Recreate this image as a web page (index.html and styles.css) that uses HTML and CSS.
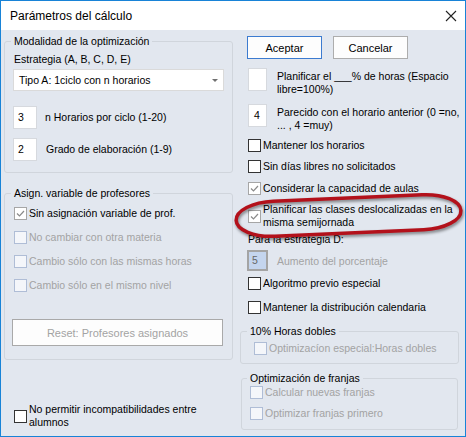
FILE: index.html
```html
<!DOCTYPE html>
<html lang="es">
  <head>
    <meta charset="UTF-8" />
    <title>Parámetros del cálculo</title>
    <link rel="stylesheet" href="styles.css">
  </head>
  <body>
    <div class="window">
      <div class="titlebar">
        <span class="title">Parámetros del cálculo</span>
        <svg class="close" width="12" height="12" viewBox="0 0 12 12">
          <path d="M1 1 L11 11 M11 1 L1 11" stroke="#222" stroke-width="1.1" fill="none" />
        </svg>
      </div>

      <div class="content">
        <div class="col-left">
          <fieldset class="group g-modal">
            <legend>Modalidad de la optimización</legend>
            <div class="label">Estrategia (A, B, C, D, E)</div>
            <div class="combo">
              <span>Tipo A: 1ciclo con n horarios</span>
              <span class="arrow"></span>
            </div>
            <div class="field-row row-n">
              <span class="input in-left">3</span>
              <span class="field-text">n Horarios por ciclo (1-20)</span>
            </div>
            <div class="field-row row-g">
              <span class="input in-left">2</span>
              <span class="field-text">Grado de elaboración (1-9)</span>
            </div>
          </fieldset>

          <fieldset class="group g-asign">
            <legend>Asign. variable de profesores</legend>
            <label class="check first checked">
              <span class="box"><svg width="11" height="11" viewBox="0 0 11 11"><path d="M2 5.5 L4.5 8 L9 3" stroke="#8a8a8a" stroke-width="1.2" fill="none" /></svg></span>
              <span>Sin asignación variable de prof.</span>
            </label>
            <label class="check disabled">
              <span class="box"></span>
              <span>No cambiar con otra materia</span>
            </label>
            <label class="check disabled">
              <span class="box"></span>
              <span>Cambio sólo con las mismas horas</span>
            </label>
            <label class="check disabled">
              <span class="box"></span>
              <span>Cambio sólo en el mismo nivel</span>
            </label>
            <div class="btn btn-reset">Reset: Profesores asignados</div>
          </fieldset>

          <label class="check bottom-check">
            <span class="box"></span>
            <span>No permitir incompatibilidades entre<br>alumnos</span>
          </label>
        </div>

        <div class="col-right">
          <div class="buttons">
            <div class="btn btn-default">Aceptar</div>
            <div class="btn">Cancelar</div>
          </div>

          <div class="field-row row-plan">
            <span class="input in-right"></span>
            <span class="field-text">Planificar el ___% de horas (Espacio<br>libre=100%)</span>
          </div>
          <div class="field-row row-par">
            <span class="input in-right">4</span>
            <span class="field-text">Parecido con el horario anterior (0 =no,<br>... , 4 =muy)</span>
          </div>

          <label class="check r1">
            <span class="box"></span>
            <span>Mantener los horarios</span>
          </label>
          <label class="check r2">
            <span class="box"></span>
            <span>Sin días libres no solicitados</span>
          </label>
          <label class="check r3 checked">
            <span class="box"><svg width="11" height="11" viewBox="0 0 11 11"><path d="M2 5.5 L4.5 8 L9 3" stroke="#8a8a8a" stroke-width="1.2" fill="none" /></svg></span>
            <span>Considerar la capacidad de aulas</span>
          </label>
          <label class="check r4 checked">
            <span class="box"><svg width="11" height="11" viewBox="0 0 11 11"><path d="M2 5.5 L4.5 8 L9 3" stroke="#8a8a8a" stroke-width="1.2" fill="none" /></svg></span>
            <span>Planificar las clases deslocalizadas en la<br>misma semijornada</span>
          </label>

          <div class="label label-d">Para la estrategia D:</div>
          <div class="field-row row-aum">
            <span class="input in-disabled">5</span>
            <span class="field-text muted">Aumento del porcentaje</span>
          </div>

          <label class="check r5">
            <span class="box"></span>
            <span>Algoritmo previo especial</span>
          </label>
          <label class="check r6">
            <span class="box"></span>
            <span>Mantener la distribución calendaria</span>
          </label>

          <fieldset class="group g-dobles">
            <legend>10% Horas dobles</legend>
            <label class="check disabled">
              <span class="box"></span>
              <span>Optimizacíon especial:Horas dobles</span>
            </label>
          </fieldset>

          <fieldset class="group g-franjas">
            <legend>Optimización de franjas</legend>
            <label class="check disabled">
              <span class="box"></span>
              <span>Calcular nuevas franjas</span>
            </label>
            <label class="check disabled f2">
              <span class="box"></span>
              <span>Optimizar franjas primero</span>
            </label>
          </fieldset>
        </div>
      </div>

      <svg class="highlight" width="466" height="437" viewBox="0 0 466 437">
        <rect x="236" y="198" width="225" height="35" rx="38" ry="17.5" transform="rotate(-2.5 348 215)"
              fill="none" stroke="#b3111b" stroke-width="3.5" />
      </svg>
    </div>
  </body>
</html>
```

FILE: styles.css
```css
* {
  margin: 0;
  padding: 0;
  box-sizing: border-box;
}
body {
  background: #e2e7ef;
  font-family: "Liberation Sans", Arial, sans-serif;
  font-size: 10.5px;
  color: #000;
}
.window {
  width: 466px;
  height: 437px;
  border: 1px solid #1883d7;
  background: #e2e7ef;
  position: relative;
  overflow: hidden;
  white-space: nowrap;
}

/* title bar */
.titlebar {
  height: 29px;
  background: #fff;
  display: flex;
  align-items: center;
  justify-content: space-between;
  padding: 0 8px 0 9px;
}
.title {
  font-family: "Liberation Sans", Arial, sans-serif;
  font-size: 12px;
  color: #000;
}
.close {
  margin-top: 1px;
}

.content {
  display: flex;
  padding-left: 3px;
}
.col-left {
  width: 229px;
  display: flex;
  flex-direction: column;
}
.col-right {
  width: 219px;
  margin-left: 7px;
  display: flex;
  flex-direction: column;
}

/* group boxes */
.group {
  border: 1px solid #d0d5dc;
  border-radius: 3px;
  padding: 0 8px 0 9px;
  min-width: 0;
}
.group legend {
  line-height: 14px;
  padding: 0 3px;
  margin-left: -3px;
}
.g-modal {
  margin-top: 4px;
  padding-top: 4px;
  padding-bottom: 11px;
}
.g-asign {
  margin-top: 13px;
  padding-top: 7px;
  padding-bottom: 13px;
}

.label {
  line-height: 14px;
}

.combo {
  margin-top: 3px;
  margin-left: -1px;
  width: 211px;
  height: 22px;
  background: #fff;
  border: 1px solid #dadada;
  display: flex;
  align-items: center;
  justify-content: space-between;
  padding: 0 5px 0 5px;
}
.combo .arrow {
  width: 0;
  height: 0;
  border-left: 3px solid transparent;
  border-right: 3px solid transparent;
  border-top: 3px solid #707070;
  margin-top: 1px;
}

.field-row {
  display: flex;
  align-items: flex-start;
}
.input {
  background: #fff;
  border: 1px solid #d6d9de;
  height: 23px;
  line-height: 21px;
  padding-left: 4px;
  flex: none;
}
.in-left {
  width: 24px;
  margin-left: -1px;
}
.field-text {
  line-height: 13px;
}
.row-n {
  margin-top: 15px;
}
.row-n .field-text,
.row-g .field-text {
  margin-left: 8px;
  margin-top: 5px;
}
.row-g {
  margin-top: 9px;
}
.row-g .field-text {
  margin-left: 9px;
}

/* checkboxes */
.check {
  display: flex;
  align-items: center;
  line-height: 13px;
  margin-top: 11px;
}
.check .box {
  width: 13px;
  height: 13px;
  border: 1px solid #333;
  background: #fff;
  margin-right: 2px;
  flex: none;
  display: flex;
  align-items: center;
  justify-content: center;
}
.check.checked .box {
  border-color: #a6a6a6;
}
.check.disabled {
  color: #a3a3a3;
}
.check.disabled .box {
  border-color: #afbdd6;
  background: #f4f6fa;
}
.g-asign .check.first {
  margin-top: 0;
}

.btn {
  height: 23px;
  width: 75px;
  background: #fdfdfd;
  border: 1px solid #adadad;
  display: flex;
  align-items: center;
  justify-content: center;
  font-size: 11px;
}
.btn-default {
  border-color: #3c7bd0;
}
.btn-reset {
  margin-top: 27px;
  margin-left: -2px;
  width: 211px;
  height: 27px;
  color: #a3a3a3;
  border-color: #a9a9a9;
}

.bottom-check {
  margin-top: 43px;
  margin-left: 10px;
}

/* right column */
.buttons {
  display: flex;
  gap: 11px;
  margin-top: 6px;
  margin-left: 7px;
}
.in-right {
  width: 19px;
  margin-left: 8px;
  padding-left: 5px;
}
.row-plan {
  margin-top: 9px;
}
.row-par {
  margin-top: 8px;
}
.row-plan .field-text,
.row-par .field-text {
  margin-left: 10px;
  margin-top: 2px;
}
.col-right > .check {
  margin-left: 8px;
}
.r1 {
  margin-top: 7px !important;
}
.r2 {
  margin-top: 8px !important;
}
.r3 {
  margin-top: 9px !important;
}
.r4 {
  margin-top: 8px !important;
}
.label-d {
  margin-top: 3px;
  margin-left: 8px;
}
.row-aum {
  margin-top: 4px;
  margin-left: 7px;
}
.in-disabled {
  width: 21px;
  height: 21px;
  line-height: 17px;
  background: #c4d5ee;
  border: 2px solid #a4a4a4;
  color: #666;
  padding-left: 3px;
}
.muted {
  color: #a3a3a3;
}
.row-aum .field-text {
  margin-left: 9px;
  margin-top: 5px;
}
.r5 {
  margin-top: 6px !important;
}
.r6 {
  margin-top: 11px !important;
}

.g-dobles {
  margin-top: 10px;
  padding: 4px 8px 8px 13px;
}
.g-dobles legend {
  margin-left: -7px;
}
.g-franjas {
  margin-top: 7px;
  margin-left: 1px;
  width: 217px;
  padding: 1px 8px 9px 8px;
}
.g-dobles .check,
.g-franjas .check {
  margin-top: 0;
}
.g-franjas .f2 {
  margin-top: 8px;
}

/* red marker drawn over the dialog */
.highlight {
  position: absolute;
  left: -1px;
  top: -1px;
  pointer-events: none;
  filter: drop-shadow(1px 2px 1.5px rgba(0, 0, 0, 0.45));
}
```
